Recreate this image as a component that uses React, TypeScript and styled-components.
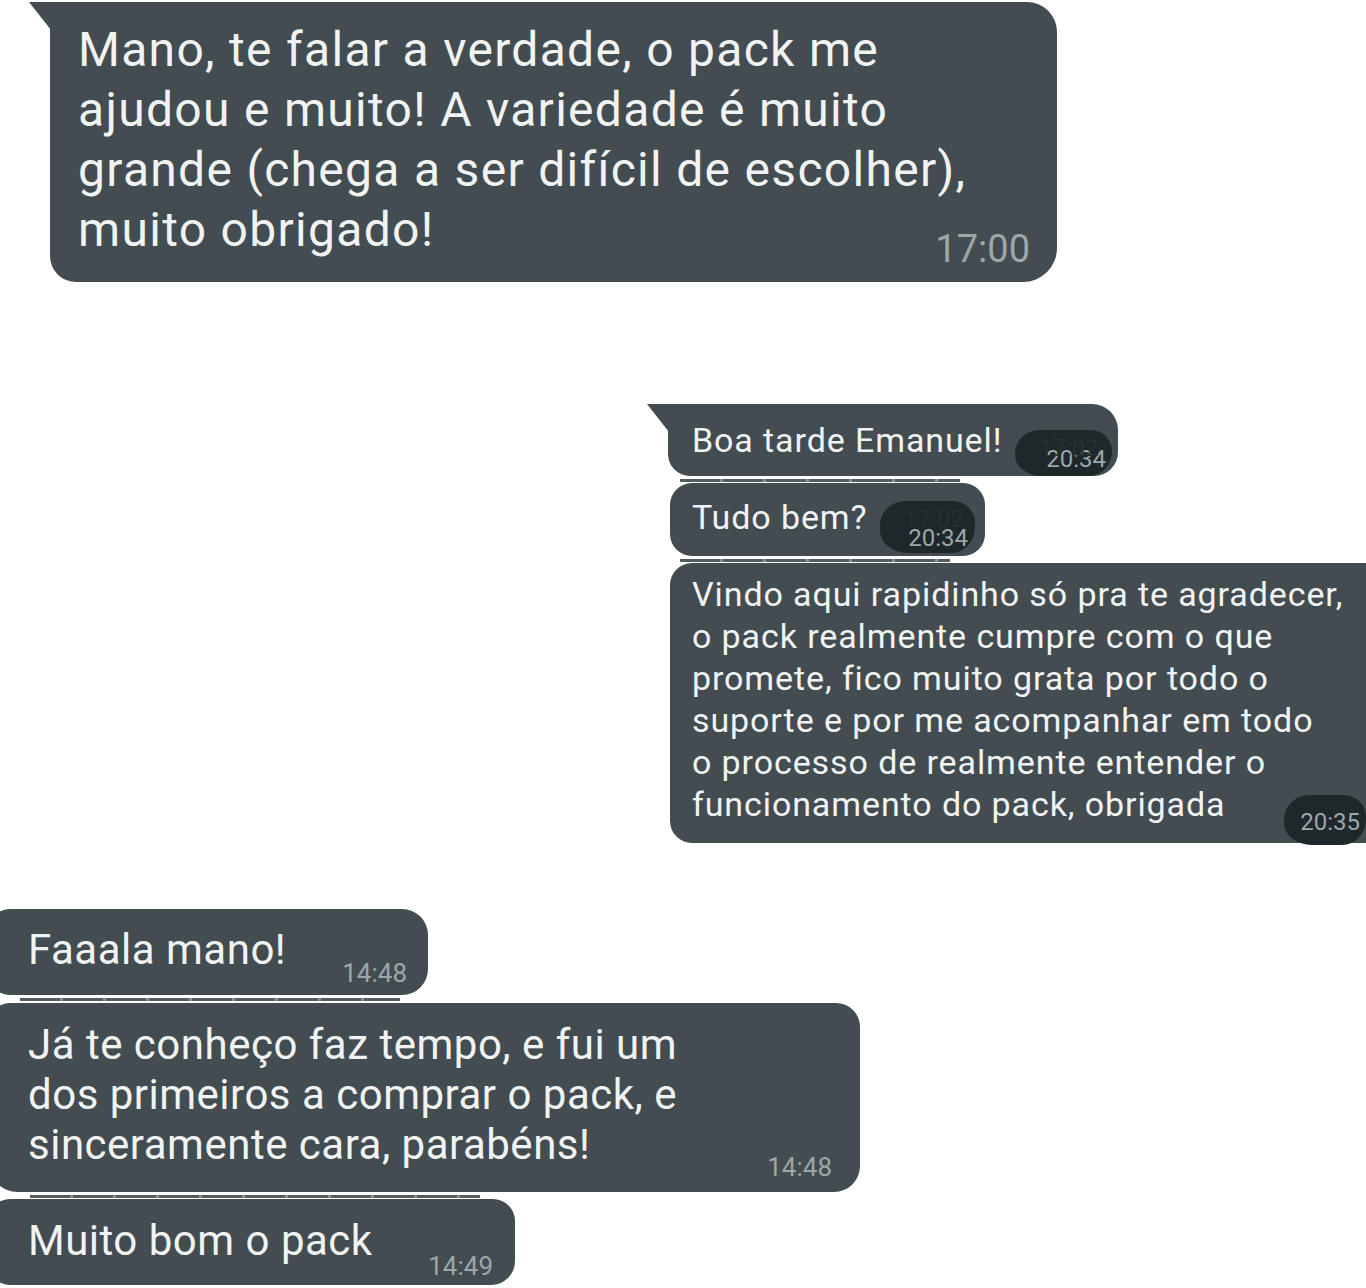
import React from "react";
import styled, { createGlobalStyle } from "styled-components";

const GlobalStyle = createGlobalStyle`
  html, body {
    margin: 0;
    padding: 0;
    background: #ffffff;
  }
  body {
    font-family: Roboto, "Noto Sans", "Liberation Sans", sans-serif;
  }
`;

const Page = styled.div`
  width: 1366px;
  height: 1288px;
  overflow: hidden;
  background: #ffffff;
  display: flex;
  flex-direction: column;
`;

// a run of consecutive messages from one side of the chat
const Group = styled.div<{ $top: number; $indent: number; $gap: number }>`
  display: flex;
  flex-direction: column;
  align-items: flex-start;
  gap: ${(p) => p.$gap}px;
  margin-top: ${(p) => p.$top}px;
  padding-left: ${(p) => p.$indent}px;
`;

type BubbleProps = {
  $width: number;
  $height: number;
  $pad: string;
  $shift?: number;
  $radius?: string;
  $tail?: boolean;
  $streak?: [number, number];
};

const Bubble = styled.div<BubbleProps>`
  position: relative;
  flex-shrink: 0;
  box-sizing: border-box;
  margin-left: ${(p) => p.$shift || 0}px;
  width: ${(p) => p.$width}px;
  height: ${(p) => p.$height}px;
  padding: ${(p) => p.$pad};
  background: #434c50;
  border-radius: ${(p) => p.$radius || "22px"};

  ${(p) =>
    p.$tail &&
    `
    &::before {
      content: "";
      position: absolute;
      top: 0;
      left: -21px;
      width: 22px;
      height: 28px;
      background: #434c50;
      clip-path: polygon(0 0, 100% 0, 100% 100%);
    }
  `}

  ${(p) =>
    p.$streak &&
    `
    &::after {
      content: "";
      position: absolute;
      bottom: -6px;
      left: ${p.$streak[0]}px;
      width: ${p.$streak[1]}px;
      height: 3px;
      background: repeating-linear-gradient(
        90deg,
        #2b3336 0 40px,
        #6b7376 40px 43px
      );
      opacity: 0.8;
    }
  `}
`;

const Text = styled.div<{ $size: number; $line: number; $track: number }>`
  font-size: ${(p) => p.$size}px;
  line-height: ${(p) => p.$line}px;
  letter-spacing: ${(p) => p.$track}px;
  color: #f1f3f3;
  white-space: pre-line;
`;

const Time = styled.span<{ $size: number; $right: number; $bottom: number }>`
  position: absolute;
  right: ${(p) => p.$right}px;
  bottom: ${(p) => p.$bottom}px;
  font-size: ${(p) => p.$size}px;
  line-height: 1;
  color: #9da6a9;
`;

// dark smudge painted over the original timestamp
const Blob = styled.span<{
  $right: number;
  $bottom: number;
  $width: number;
  $height: number;
  $padR: number;
  $padB: number;
}>`
  position: absolute;
  right: ${(p) => p.$right}px;
  bottom: ${(p) => p.$bottom}px;
  width: ${(p) => p.$width}px;
  height: ${(p) => p.$height}px;
  box-sizing: border-box;
  display: flex;
  align-items: flex-end;
  justify-content: flex-end;
  padding: 0 ${(p) => p.$padR}px ${(p) => p.$padB}px 0;
  background: #1e2729;
  border-radius: 26px 22px 24px 28px / 24px 22px 26px 22px;
  font-size: 24px;
  line-height: 1;
  color: #9da6a9;
`;

const Ghost = styled.span`
  position: absolute;
  left: 24px;
  top: 6px;
  font-size: 24px;
  line-height: 1;
  color: #273033;
`;

export default function App() {
  return (
    <>
      <GlobalStyle />
      <Page>
        <Group $top={2} $indent={50} $gap={0}>
          <Bubble
            $width={1007}
            $height={280}
            $pad="18px 0 0 28px"
            $radius="0 30px 34px 26px"
            $tail
          >
            <Text $size={48} $line={60} $track={1.3}>
              {"Mano, te falar a verdade, o pack me\najudou e muito! A variedade é muito\ngrande (chega a ser difícil de escolher),\nmuito obrigado!"}
            </Text>
            <Time $size={38} $right={27} $bottom={14}>
              17:00
            </Time>
          </Bubble>
        </Group>

        <Group $top={122} $indent={670} $gap={7}>
          <Bubble
            $shift={-2}
            $width={450}
            $height={72}
            $pad="16px 0 0 24px"
            $radius="0 26px 24px 22px"
            $tail
            $streak={[12, 280]}
          >
            <Text $size={34} $line={40} $track={0.9}>
              Boa tarde Emanuel!
            </Text>
            <Blob $right={6} $bottom={0} $width={97} $height={46} $padR={6} $padB={5}>
              <Ghost>17:02</Ghost>
              20:34
            </Blob>
          </Bubble>

          <Bubble $width={315} $height={73} $pad="14px 0 0 22px" $streak={[10, 270]}>
            <Text $size={34} $line={40} $track={0.9}>
              Tudo bem?
            </Text>
            <Blob $right={10} $bottom={3} $width={95} $height={52} $padR={7} $padB={3}>
              <Ghost>17:02</Ghost>
              20:34
            </Blob>
          </Bubble>

          <Bubble
            $width={696}
            $height={280}
            $pad="10px 0 0 22px"
            $radius="22px 0 0 22px"
          >
            <Text $size={34} $line={42} $track={0.9}>
              {"Vindo aqui rapidinho só pra te agradecer,\no pack realmente cumpre com o que\npromete, fico muito grata por todo o\nsuporte e por me acompanhar em todo\no processo de realmente entender o\nfuncionamento do pack, obrigada"}
            </Text>
            <Blob $right={0} $bottom={-2} $width={82} $height={50} $padR={6} $padB={11}>
              20:35
            </Blob>
          </Bubble>
        </Group>

        <Group $top={66} $indent={0} $gap={7.5}>
          <Bubble
            $shift={-12}
            $width={440}
            $height={86}
            $pad="16px 0 0 40px"
            $radius="22px 26px 26px 22px"
            $streak={[32, 380]}
          >
            <Text $size={42} $line={50} $track={0.5}>
              Faaala mano!
            </Text>
            <Time $size={26} $right={21} $bottom={9}>
              14:48
            </Time>
          </Bubble>

          <Bubble
            $shift={-12}
            $width={872}
            $height={189}
            $pad="17px 0 0 40px"
            $radius="22px 24px 26px 30px"
            $streak={[42, 450]}
          >
            <Text $size={42} $line={50} $track={0.5}>
              {"Já te conheço faz tempo, e fui um\ndos primeiros a comprar o pack, e\nsinceramente cara, parabéns!"}
            </Text>
            <Time $size={26} $right={28} $bottom={12}>
              14:48
            </Time>
          </Bubble>

          <Bubble
            $shift={-12}
            $width={527}
            $height={86}
            $pad="17px 0 0 40px"
            $radius="22px 22px 24px 22px"
          >
            <Text $size={42} $line={50} $track={0.5}>
              Muito bom o pack
            </Text>
            <Time $size={26} $right={22} $bottom={6}>
              14:49
            </Time>
          </Bubble>
        </Group>
      </Page>
    </>
  );
}
